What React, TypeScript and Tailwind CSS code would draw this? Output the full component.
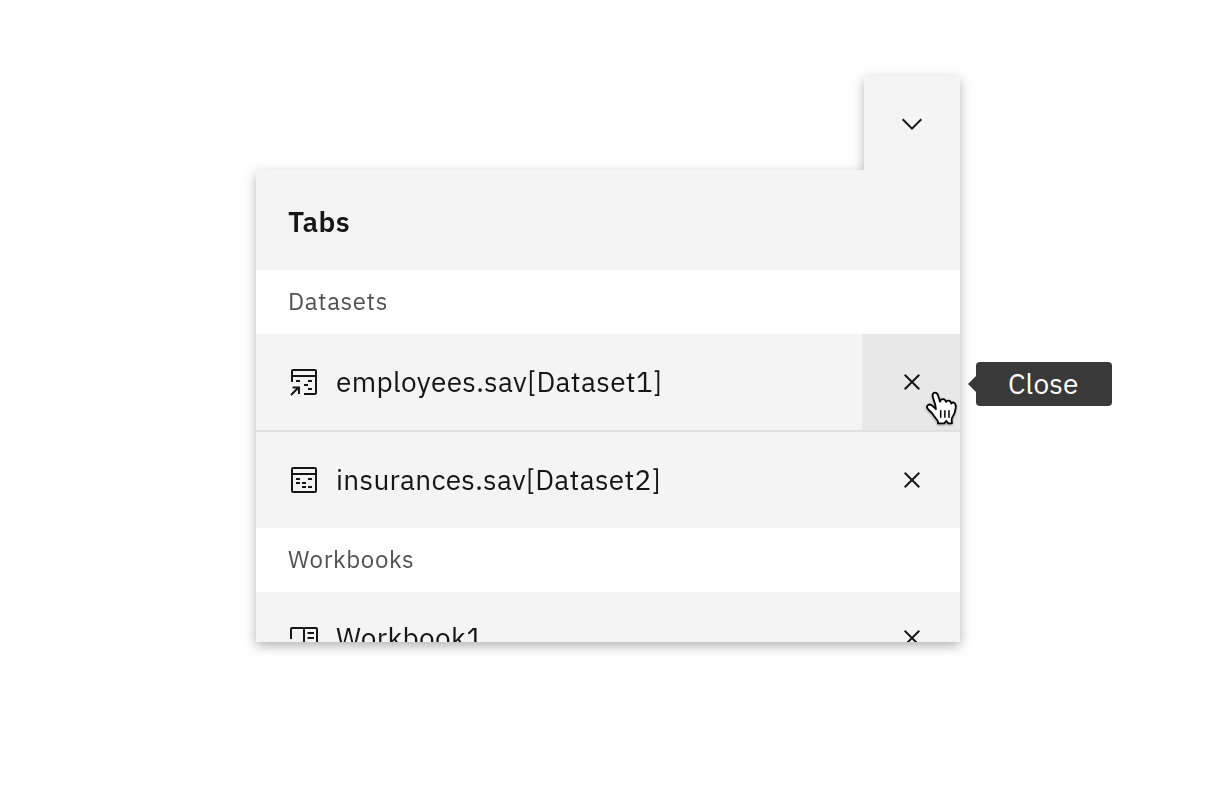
import React from "react";

const svgProps = { width: 32, height: 32, viewBox: "0 0 32 32", fill: "none", stroke: "#161616", strokeWidth: 2 };

function DatasetLinkIcon() {
  return (
    <svg {...svgProps}>
      <path d="M4 16V5a1 1 0 0 1 1-1h22a1 1 0 0 1 1 1v22a1 1 0 0 1-1 1H16M4 10h24" />
      <path d="M8 15h4M20 15h4M16 19h4M20 23h4M3 29l8-8M4.5 21.5H11V28" />
    </svg>
  );
}

function DatasetIcon() {
  return (
    <svg {...svgProps}>
      <rect x="4" y="4" width="24" height="24" rx="1" />
      <path d="M4 10h24M8 15h4M20 15h4M8 19h4M14 19h4M14 23h4M20 23h4" />
    </svg>
  );
}

function WorkbookIcon() {
  return (
    <svg {...svgProps}>
      <path d="M3 17V7a1 1 0 0 1 1-1h24a1 1 0 0 1 1 1v20H16V6M19.5 11H26M19.5 16H26M19.5 21H26" />
    </svg>
  );
}

function CloseIcon() {
  return (
    <svg {...svgProps}>
      <path d="M8.7 8.7l14.6 14.6M23.3 8.7L8.7 23.3" />
    </svg>
  );
}

function Cursor() {
  return (
    <svg
      className="drop-shadow-[0_1px_1px_rgba(0,0,0,0.35)]"
      width="36"
      height="38"
      viewBox="0 0 36 38"
    >
      <path
        d="M14 34.4V32.6C13.6 31 11.2 29 9.6 26.4C8.5 24.3 6.9 22.8 4.8 21C3 19.5 2.8 17.5 3.6 16.5C4.7 15.2 6.5 15.3 8.2 16.6L12 20C11.7 15.5 9.7 11.6 8.8 7.6C8.3 5.3 9.2 3.7 10.9 3.7C12.4 3.7 13.4 4.8 14 6.4C15 8.8 15.4 10.3 15.9 12.6C16.5 10.8 17.6 10.1 19.1 10.2C20.8 10.3 21.6 11.3 21.9 12.9C22.7 11.8 23.6 11.5 24.8 11.7C26.4 12 27 13.1 27.2 14.6C28 13.6 29 13.3 30 13.7C31.6 14.4 31.9 16.3 31.7 18.8C31.4 23.2 30 26 27.9 29.2C27.4 30.8 27.7 32.5 28 34.2C26.8 34.5 25.3 34.5 24.3 34.3L22.3 31.9L20.2 34.4Z"
        fill="white"
        stroke="black"
        strokeWidth="1.8"
        strokeLinejoin="round"
      />
      <path d="M16.7 21.3v7.5M20.9 21.3v7.5M25 21.3v7.5" stroke="black" strokeWidth="1.5" />
    </svg>
  );
}

function Section({ label }: { label: string }) {
  return (
    <div className="flex h-16 shrink-0 items-center bg-white pb-0.5 pl-8 text-[24px] text-[#525252]">
      <span className="tracking-[0.6px]">{label}</span>
    </div>
  );
}

type RowProps = { icon: React.ReactNode; label: string; height?: string; tracking?: string; hovered?: boolean };

function Row({ icon, label, height = "h-24", tracking = "tracking-[0.32px]", hovered }: RowProps) {
  return (
    <div className={`flex shrink-0 items-center pl-8 text-[28px] text-[#161616] ${height}`}>
      {icon}
      <span className={`ml-4 flex-1 whitespace-nowrap ${tracking}`}>{label}</span>
      <button
        className={`flex h-full w-[98px] items-center justify-center pl-0.5 ${hovered ? "bg-[#e8e8e8]" : ""}`}
        aria-label="Close"
      >
        <CloseIcon />
      </button>
    </div>
  );
}

export default function App() {
  return (
    <main className="h-[810px] w-[1216px] overflow-hidden bg-white pl-64 pt-[76px] font-['IBM_Plex_Sans','Roboto',sans-serif]">
      <div className="relative w-[704px]">
        <div className="flex flex-col drop-shadow-[0_4px_6px_rgba(0,0,0,0.3)]">
          <button className="flex h-[94px] w-24 items-center justify-center self-end bg-[#f4f4f4] pt-0.5" aria-label="Tabs">
            <svg {...svgProps}>
              <path d="M6.7 11.3l9.3 9.3 9.3-9.3" />
            </svg>
          </button>
          <div className="flex h-[472px] flex-col overflow-hidden bg-[#f4f4f4]">
            <h1 className="flex h-[100px] shrink-0 items-center pl-8 pt-1 text-[28px] font-semibold text-[#161616]">
              <span className="tracking-[0.3px]">Tabs</span>
            </h1>
            <Section label="Datasets" />
            <Row icon={<DatasetLinkIcon />} label="employees.sav[Dataset1]" hovered />
            <div className="h-0.5 shrink-0 bg-[#e0e0e0]" />
            <Row icon={<DatasetIcon />} label="insurances.sav[Dataset2]" tracking="tracking-[0.29px]" />
            <Section label="Workbooks" />
            <Row icon={<WorkbookIcon />} label="Workbook1" height="h-[92px]" />
          </div>
        </div>
        <div className="absolute left-[712px] top-[286px] flex items-center">
          <svg width="8" height="16" viewBox="0 0 8 16">
            <path d="M8 0v16L0 8z" fill="#393939" />
          </svg>
          <div className="flex h-11 w-[136px] items-center rounded bg-[#393939] pl-8 text-[28px] text-white">
            <span className="tracking-[0.2px]">Close</span>
          </div>
        </div>
        <div className="absolute left-[668px] top-[313px]">
          <Cursor />
        </div>
      </div>
    </main>
  );
}
